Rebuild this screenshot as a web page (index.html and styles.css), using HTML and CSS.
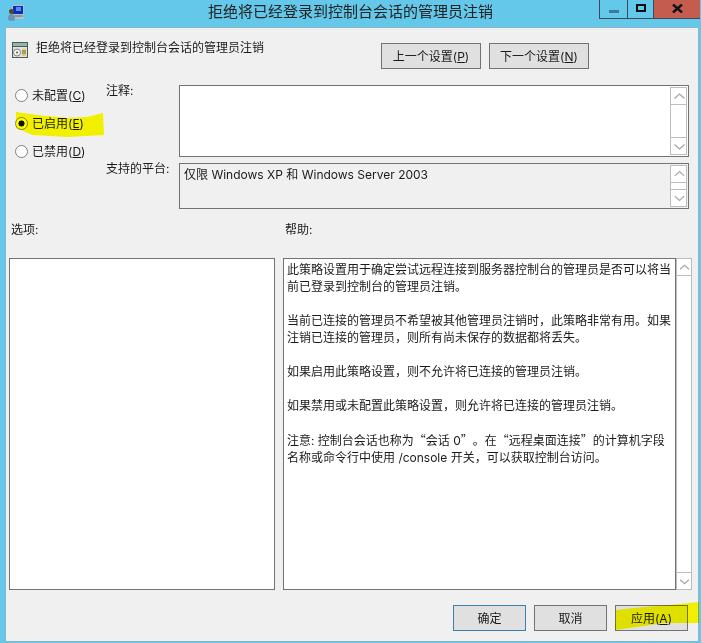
FILE: index.html
```html
<!DOCTYPE html>
<html lang="zh-CN">
<head>
  <meta charset="UTF-8" />
  <title>拒绝将已经登录到控制台会话的管理员注销</title>
  <link rel="stylesheet" href="styles.css">
</head>
<body>
  <svg class="defs" width="0" height="0">
    <symbol id="up" viewBox="0 0 17 17"><path d="M3.5 10.5 8.5 6l5 4.5" fill="none" stroke="#a6a6a6" stroke-width="1.3"/></symbol>
    <symbol id="down" viewBox="0 0 17 17"><path d="M3.5 6.5 8.5 11l5-4.5" fill="none" stroke="#a6a6a6" stroke-width="1.3"/></symbol>
  </svg>

  <header class="titlebar">
    <div class="title-left">
      <svg class="app-icon" width="16" height="16" viewBox="0 0 16 16">
        <rect x="4" y="0" width="12" height="10" fill="#b9bec6"/>
        <rect x="5" y="1" width="10" height="8" fill="#0a2fb8"/>
        <rect x="8" y="2" width="5" height="4" fill="#5a8af0"/>
        <rect x="7" y="10" width="7" height="2" fill="#8d949c"/>
        <rect x="5" y="12" width="11" height="2" fill="#b9bec6"/>
        <circle cx="3.500" cy="6.500" r="2.500" fill="#5a4426"/>
        <path d="M0 14c0-4 1.500-5 3.500-5S7 10 7 14c0 1-1 2-3.500 2S0 15 0 14z" fill="#6d93b4"/>
      </svg>
    </div>
    <div class="title">拒绝将已经登录到控制台会话的管理员注销</div>
    <div class="caption">
      <div class="cap-btn cap-min"><span class="min-glyph"></span></div>
      <div class="cap-btn cap-max"><span class="max-glyph"></span></div>
      <div class="cap-btn cap-close">
        <svg width="11" height="9" viewBox="0 0 11 9"><path d="M1 0.500 10 8.500M10 0.500 1 8.500" stroke="#111" stroke-width="2.400"/></svg>
      </div>
    </div>
  </header>

  <main class="panel">
    <div class="head">
      <svg class="policy-icon" width="16" height="16" viewBox="0 0 16 16">
        <rect width="16" height="16" fill="#4d5a5c"/>
        <rect x="1" y="1" width="14" height="3" fill="#8fb8a8"/>
        <rect x="1" y="5" width="14" height="10" fill="#dfe5d8"/>
        <circle cx="5" cy="10.500" r="3.500" fill="#f4f4f4" stroke="#666" stroke-width="0.800"/>
        <circle cx="5" cy="10.500" r="1" fill="#555"/>
        <rect x="10" y="7" width="4" height="7" fill="#e8c860"/>
        <path d="M10 9h4M10 11h4" stroke="#556" stroke-width="0.800"/>
      </svg>
      <div class="policy-name">拒绝将已经登录到控制台会话的管理员注销</div>
      <div class="nav">
        <button class="btn btn-nav">上一个设置(<u>P</u>)</button>
        <button class="btn btn-nav">下一个设置(<u>N</u>)</button>
      </div>
    </div>

    <div class="settings">
      <div class="radios">
        <label class="radio"><input type="radio" name="state" /><span>未配置(<u>C</u>)</span></label>
        <label class="radio"><input type="radio" name="state" checked /><span>已启用(<u>E</u>)</span></label>
        <label class="radio"><input type="radio" name="state" /><span>已禁用(<u>D</u>)</span></label>
      </div>
      <div class="fields">
        <div class="field field-note">
          <div class="field-label">注释:</div>
          <div class="box box-white">
            <div class="scroll scroll-note">
              <div class="sb-btn"><svg width="17" height="17"><use href="#up"/></svg></div>
              <div class="sb-track"></div>
              <div class="sb-btn"><svg width="17" height="17"><use href="#down"/></svg></div>
            </div>
          </div>
        </div>
        <div class="field field-platform">
          <div class="field-label">支持的平台:</div>
          <div class="box">
            <div class="platform-text">仅限 Windows XP 和 Windows Server 2003</div>
            <div class="scroll scroll-platform">
              <div class="sb-btn"><svg width="17" height="16"><use href="#up"/></svg></div>
              <div class="sb-track"></div>
              <div class="sb-btn"><svg width="17" height="16"><use href="#down"/></svg></div>
            </div>
          </div>
        </div>
      </div>
    </div>

    <div class="panes">
      <div class="pane-label">选项:</div>
      <div class="pane-label">帮助:</div>
      <div class="pane-box"></div>
      <div class="help-wrap">
        <div class="pane-box help-text">
          <p>此策略设置用于确定尝试远程连接到服务器控制台的管理员是否可以将当<br>前已登录到控制台的管理员注销。</p>
          <p>当前已连接的管理员不希望被其他管理员注销时，此策略非常有用。如果<br>注销已连接的管理员，则所有尚未保存的数据都将丢失。</p>
          <p>如果启用此策略设置，则不允许将已连接的管理员注销。</p>
          <p>如果禁用或未配置此策略设置，则允许将已连接的管理员注销。</p>
          <p>注意: 控制台会话也称为<span class="wide-quote">“</span>会话 0<span class="wide-quote">”</span>。在<span class="wide-quote">“</span>远程桌面连接<span class="wide-quote">”</span>的计算机字段<br>名称或命令行中使用 /console 开关，可以获取控制台访问。</p>
        </div>
        <div class="scroll scroll-help">
          <div class="sb-btn"><svg width="15" height="17"><use href="#up"/></svg></div>
          <div class="sb-track"></div>
          <div class="sb-btn"><svg width="15" height="17"><use href="#down"/></svg></div>
        </div>
      </div>
    </div>

    <div class="footer">
      <button class="btn btn-foot btn-default">确定</button>
      <button class="btn btn-foot">取消</button>
      <button class="btn btn-foot">应用(<u>A</u>)</button>
    </div>
  </main>

  <!-- yellow marker strokes drawn over the dialog -->
  <svg class="marker" width="701" height="643" viewBox="0 0 701 643">
    <polygon points="16,112 37,115 67,118 87,117 103,113 104,135 67,137 33,135 16,128" />
    <polygon points="616,610 643,607 670,605 699,602 699,623 663,623 637,627 615,630" />
  </svg>
</body>
</html>
```

FILE: styles.css
```css
* {
  box-sizing: border-box;
}

html, body {
  margin: 0;
  height: 100%;
}

body {
  position: relative;
  display: flex;
  flex-direction: column;
  height: 643px;
  overflow: hidden;
  padding: 0 3px 2px 6px;
  background-color: #63c8ea;
  color: #1a1a1a;
  font-family: Inter, "Noto Sans CJK SC", sans-serif;
  font-size: 12px;
  line-height: 17px;
}

.defs {
  position: absolute;
}

.titlebar {
  display: grid;
  grid-template-columns: 1fr auto 1fr;
  height: 28px;
  margin: 0 -3px 0 -6px;
  flex-shrink: 0;
}

.title-left {
  padding: 5px 0 0 8px;
}

.app-icon {
  display: block;
}

.title {
  padding-top: 2px;
  font-size: 15px;
  line-height: 20px;
  color: #222;
}

.caption {
  display: flex;
  justify-content: flex-end;
  align-items: flex-start;
  padding-right: 1px;
}

.cap-btn {
  display: flex;
  justify-content: center;
  align-items: center;
  height: 19px;
  border-bottom: 1px solid #3b4a55;
  border-left: 1px solid #3b4a55;
}

.cap-min {
  width: 28px;
}

.cap-max {
  width: 26px;
}

.cap-close {
  width: 47px;
  background-color: #c55c50;
  padding-bottom: 2px;
}

.min-glyph {
  width: 10px;
  height: 3px;
  margin-top: 4px;
  background-color: #3c7a96;
}

.max-glyph {
  width: 10px;
  height: 8px;
  margin-bottom: 3px;
  border: 2px solid #111;
}

.panel {
  flex: 1;
  background-color: #f0f0f0;
  box-shadow: 0 0 0 1px #8cb4c8;
}

.head {
  display: flex;
  height: 57px;
  padding: 14px 0 0 6px;
}

.policy-icon {
  flex-shrink: 0;
}

.policy-name {
  margin-left: 8px;
  margin-top: -3px;
}

.nav {
  display: flex;
  gap: 8px;
  margin-left: 117px;
  margin-top: 1px;
}

.btn {
  padding: 0;
  background-color: #e0e0e0;
  border: 1px solid #737373;
  border-radius: 0;
  color: #1a1a1a;
  font: inherit;
}

.btn-nav {
  width: 100px;
  height: 26px;
}

.settings {
  display: flex;
  height: 124px;
}

.radios {
  display: flex;
  flex-direction: column;
  flex-shrink: 0;
  width: 100px;
  margin-top: -4px;
  padding-left: 9px;
}

.radio {
  display: flex;
  align-items: center;
  gap: 4px;
  height: 28px;
}

.radio input {
  appearance: none;
  flex-shrink: 0;
  width: 13px;
  height: 13px;
  margin: 0;
  background-color: #fff;
  border: 1px solid #808080;
  border-radius: 50%;
}

.radio input:checked {
  background: radial-gradient(circle, #111 0 2.800px, #fff 3.300px);
}

.fields {
  flex: 1;
  margin-right: 9px;
}

.field {
  display: flex;
}

.field-note {
  height: 72px;
}

.field-platform {
  height: 46px;
  margin-top: 6px;
}

.field-label {
  flex-shrink: 0;
  width: 73px;
  margin-top: -3px;
}

.box {
  position: relative;
  flex: 1;
  border: 1px solid #737373;
}

.box-white {
  background-color: #fff;
}

.platform-text {
  padding: 2px 0 0 4px;
}

.scroll {
  display: flex;
  flex-direction: column;
  background-color: #fff;
  border: 1px solid #bdbdbd;
}

.scroll-note,
.scroll-platform {
  position: absolute;
  top: 1px;
  right: 1px;
  bottom: 1px;
  width: 17px;
}

.scroll-help {
  width: 16px;
}

.sb-btn {
  flex-shrink: 0;
  height: 17px;
}

.sb-btn svg {
  display: block;
}

.sb-btn:first-child {
  border-bottom: 1px solid #bdbdbd;
}

.sb-btn:last-child {
  border-top: 1px solid #bdbdbd;
}

.sb-track {
  flex: 1;
}

.panes {
  display: grid;
  grid-template-columns: 266px 409px;
  grid-template-rows: 17px 332px;
  column-gap: 8px;
  row-gap: 20px;
  padding: 12px 0 0 3px;
}

.pane-label {
  padding-left: 2px;
}

.pane-box {
  background-color: #fff;
  border: 1px solid #737373;
}

.help-wrap {
  display: flex;
}

.help-text {
  flex: 1;
  padding: 2px 0 0 3px;
  white-space: nowrap;
}

.help-text p {
  margin: 0 0 17px;
}

/* curly quotes take a full cell in the CJK face, Inter would set them narrow */
.wide-quote {
  font-family: "Noto Sans CJK SC", sans-serif;
  display: inline-block;
  width: 12px;
  text-align: center;
}

.footer {
  display: flex;
  justify-content: flex-end;
  gap: 8px;
  margin-top: 15px;
  padding-right: 10px;
}

.btn-foot {
  width: 73px;
  height: 26px;
}

.btn-default {
  border-color: #3c7fb1;
}

.marker {
  position: absolute;
  top: 0;
  left: 0;
  fill: #ffff00;
  mix-blend-mode: multiply;
  pointer-events: none;
}
```
